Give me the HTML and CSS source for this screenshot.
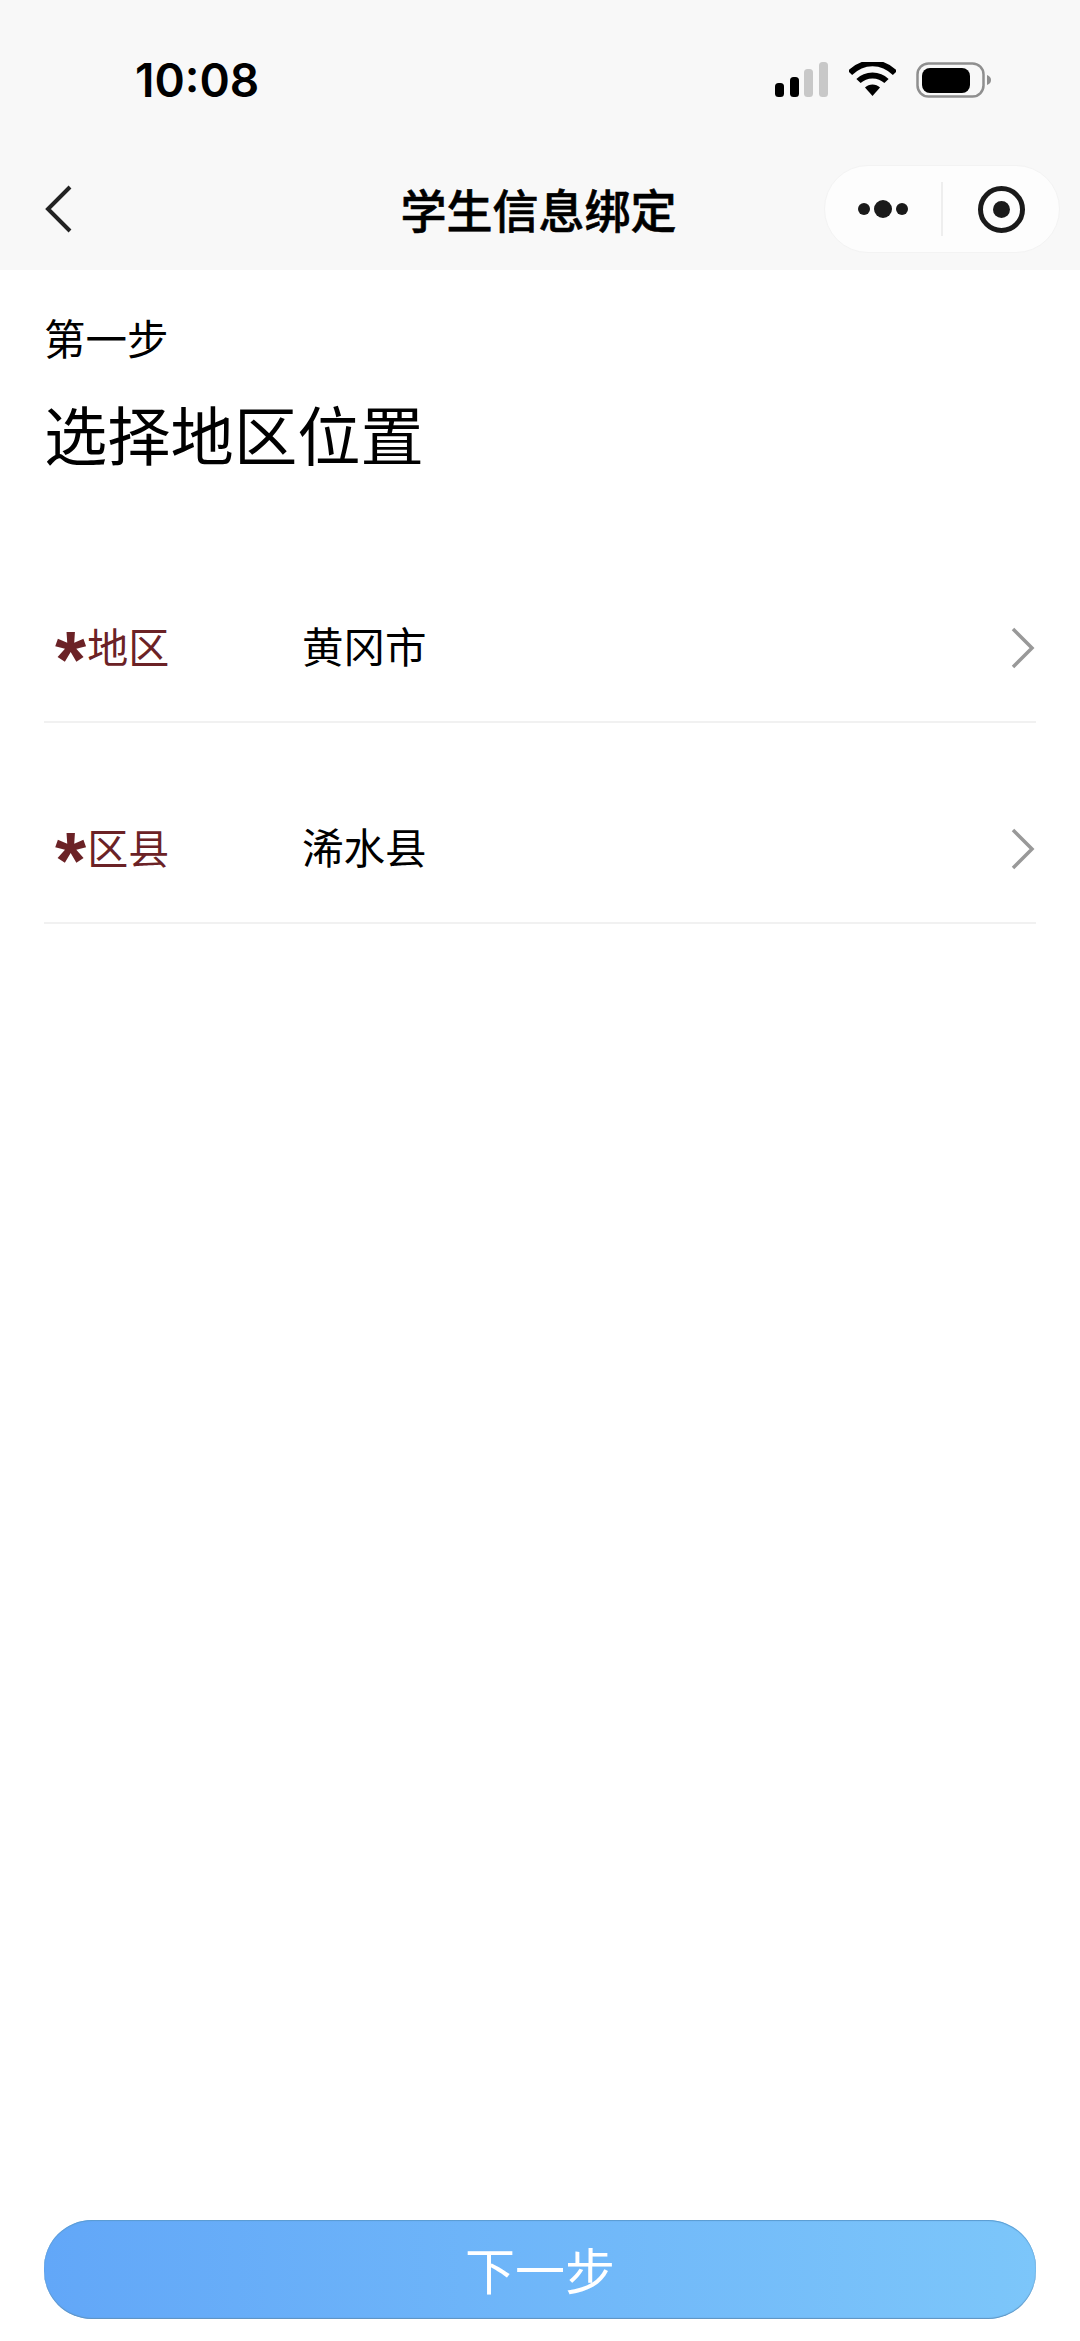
FILE: index.html
```html
<!DOCTYPE html>
<html lang="zh-CN">

<head>
    <meta charset="UTF-8">
    <meta name="viewport" content="width=device-width, initial-scale=1.0">
    <title>学生信息绑定</title>
    <link rel="stylesheet" href="styles.css">
</head>

<body>
    <div class="page">
        <div class="header">
            <div class="status-bar">
                <span class="time">10:08</span>
                <div class="status-icons">
                    <svg class="signal" width="54" height="35" viewBox="0 0 54 35">
                        <rect x="0" y="21" width="9" height="14" rx="3.5" fill="#000"/>
                        <rect x="15" y="15" width="9" height="20" rx="3.5" fill="#000"/>
                        <rect x="29" y="7" width="9" height="28" rx="3.5" fill="#c8c8c8"/>
                        <rect x="44" y="0" width="9" height="35" rx="3.5" fill="#c8c8c8"/>
                    </svg>
                    <svg class="wifi" width="47" height="35" viewBox="0 0 47 35">
                        <path d="M1 11 C14 -2 33 -2 46 11" fill="none" stroke="#000" stroke-width="6"/>
                        <path d="M9.500 19 C17 11.500 30 11.500 37.500 19" fill="none" stroke="#000" stroke-width="6"/>
                        <path d="M16 25.500 C20 21.500 27 21.500 31 25.500 L23.500 34 Z" fill="#000"/>
                    </svg>
                    <svg class="battery" width="76" height="37" viewBox="0 0 76 37">
                        <rect x="1.500" y="1.500" width="66" height="33" rx="11" fill="none" stroke="#8f8f8f" stroke-width="2.500"/>
                        <rect x="6" y="6" width="48" height="25" rx="8" fill="#000"/>
                        <path d="M71 13 C74 14 75 16 75 18 C75 20 74 22 71 23 Z" fill="#8f8f8f"/>
                    </svg>
                </div>
            </div>
            <div class="nav-bar">
                <svg class="back" width="28" height="48" viewBox="0 0 28 48">
                    <path d="M25 2 L3 24 L25 46" fill="none" stroke="#222" stroke-width="4"/>
                </svg>
                <div class="nav-title">学生信息绑定</div>
                <div class="capsule">
                    <div class="capsule-part">
                        <span class="dot"></span>
                        <span class="dot dot-big"></span>
                        <span class="dot"></span>
                    </div>
                    <div class="capsule-line"></div>
                    <div class="capsule-part">
                        <span class="target"><span class="target-in"></span></span>
                    </div>
                </div>
            </div>
        </div>

        <div class="content">
            <div class="step">第一步</div>
            <div class="step-title">选择地区位置</div>

            <div class="form">
                <div class="form-row">
                    <div class="label"><span class="star">*</span>地区</div>
                    <div class="value">黄冈市</div>
                    <svg class="arrow" width="24" height="42" viewBox="0 0 24 42">
                        <path d="M2 2 L21 21 L2 40" fill="none" stroke="#999" stroke-width="3.500"/>
                    </svg>
                </div>
                <div class="form-row">
                    <div class="label"><span class="star">*</span>区县</div>
                    <div class="value">浠水县</div>
                    <svg class="arrow" width="24" height="42" viewBox="0 0 24 42">
                        <path d="M2 2 L21 21 L2 40" fill="none" stroke="#999" stroke-width="3.500"/>
                    </svg>
                </div>
            </div>

            <button class="next-btn">下一步</button>
        </div>
    </div>
</body>

</html>
```

FILE: styles.css
```css
* {
    padding: 0;
    margin: 0;
    box-sizing: border-box;
}

body {
    background-color: #fff;
    font-family: "Noto Sans CJK SC", "Noto Sans", sans-serif;
    color: #000;
}

.page {
    width: 1080px;
    height: 2341px;
    display: flex;
    flex-direction: column;
    overflow: hidden;
}

.header {
    height: 270px;
    background-color: #f8f8f8;
}

.status-bar {
    height: 160px;
    padding: 58px 88px 0 135px;
    display: flex;
    justify-content: space-between;
    align-items: flex-start;
}

.time {
    font-family: Inter, sans-serif;
    font-size: 46px;
    font-weight: 600;
    line-height: 44px;
}

.status-icons {
    display: flex;
    align-items: flex-start;
    gap: 20px;
    padding-top: 4px;
}

.nav-bar {
    height: 98px;
    padding: 0 20px 0 45px;
    display: flex;
    align-items: center;
    justify-content: space-between;
}

.nav-title {
    flex: 1;
    text-align: center;
    font-size: 46px;
    line-height: 60px;
    font-weight: 500;
    -webkit-text-stroke: 0.6px #000;
    padding: 0 0 2px 180px;
}

.capsule {
    width: 236px;
    height: 88px;
    background-color: #fdfdfd;
    border: 1px solid #f3f3f3;
    border-radius: 44px;
    display: flex;
    align-items: center;
}

.capsule-part {
    flex: 1;
    display: flex;
    align-items: center;
    justify-content: center;
    gap: 4px;
}

.capsule-line {
    width: 2px;
    height: 54px;
    background-color: #eee;
}

.dot {
    width: 12px;
    height: 12px;
    border-radius: 50%;
    background-color: #1a1a1a;
}

.dot-big {
    width: 18px;
    height: 18px;
}

.target {
    width: 47px;
    height: 47px;
    border: 5px solid #1a1a1a;
    border-radius: 50%;
    display: flex;
    align-items: center;
    justify-content: center;
}

.target-in {
    width: 17px;
    height: 17px;
    border-radius: 50%;
    background-color: #1a1a1a;
}

.content {
    flex: 1;
    padding: 0 44px 22px;
    display: flex;
    flex-direction: column;
}

.step {
    margin-top: 38px;
    font-size: 41.500px;
    line-height: 58px;
}

.step-title {
    margin-top: 22px;
    font-size: 63.300px;
    line-height: 90px;
}

.form {
    margin-top: 44px;
}

.form-row {
    height: 201px;
    padding: 46px 0 0 11px;
    border-bottom: 2px solid #f1f1f1;
    display: flex;
    align-items: center;
}

.label {
    width: 247px;
    font-size: 41px;
    line-height: 60px;
    color: #6b2226;
    display: flex;
    align-items: center;
}

.star {
    font-family: "Liberation Sans", sans-serif;
    font-size: 80px;
    font-weight: 700;
    line-height: 60px;
    height: 60px;
    margin-right: 1px;
    transform: translateY(15px);
}

.value {
    flex: 1;
    font-size: 41.500px;
    line-height: 60px;
}

.arrow {
    margin: 6px 1px 0 0;
}

.next-btn {
    margin-top: auto;
    width: 992px;
    height: 99px;
    padding-bottom: 4px;
    border: none;
    border-radius: 48px;
    background: linear-gradient(90deg, #62a7f8, #7cc6fa);
    box-shadow: inset 0 1px 1px #5a9bd0, inset 0 -1px 1px #5f93bf;
    color: #fff;
    font-family: "Noto Sans CJK SC", "Noto Sans", sans-serif;
    font-size: 50px;
    font-weight: 400;
}
```
